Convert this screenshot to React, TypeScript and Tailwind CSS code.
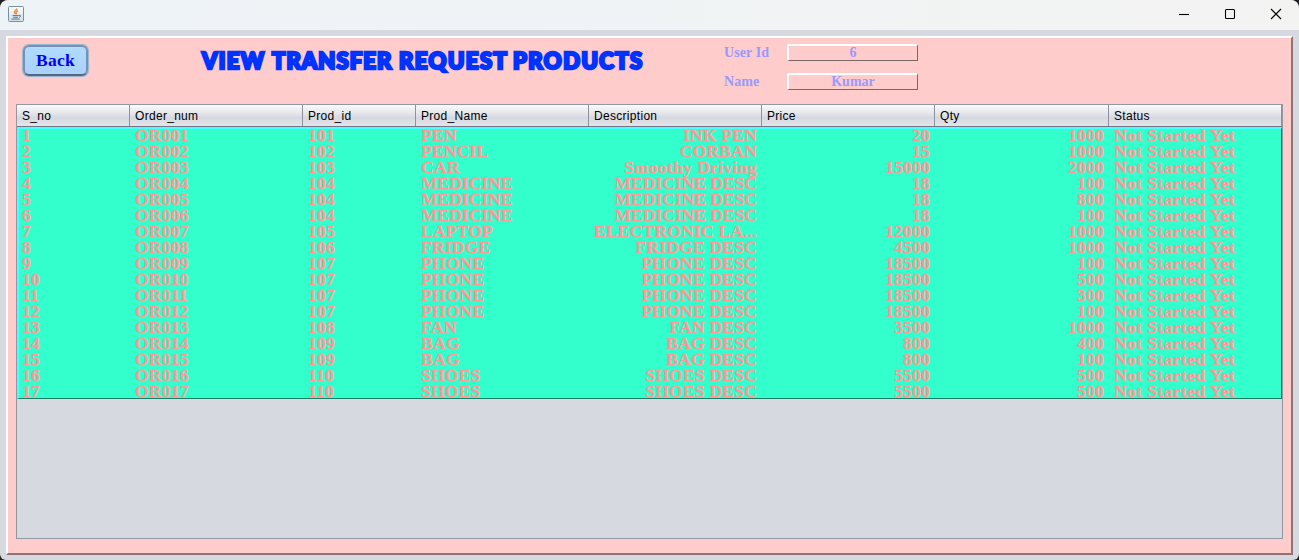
const columns = [
  { title: 'S_no', right: false },
  { title: 'Order_num', right: false },
  { title: 'Prod_id', right: false },
  { title: 'Prod_Name', right: false },
  { title: 'Description', right: true },
  { title: 'Price', right: true },
  { title: 'Qty', right: true },
  { title: 'Status', right: false },
];

const products: string[][] = [
  ['101', 'PEN', 'INK PEN', '20', '1000'],
  ['102', 'PENCIL', 'CORBAN', '15', '1000'],
  ['103', 'CAR', 'Smoothy Driving', '15000', '2000'],
  ['104', 'MEDICINE', 'MEDICINE DESC', '18', '100'],
  ['104', 'MEDICINE', 'MEDICINE DESC', '18', '800'],
  ['104', 'MEDICINE', 'MEDICINE DESC', '18', '100'],
  ['105', 'LAPTOP', 'ELECTRONIC LA...', '12000', '1000'],
  ['106', 'FRIDGE', 'FRIDGE DESC', '4500', '1000'],
  ['107', 'PHONE', 'PHONE DESC', '18500', '100'],
  ['107', 'PHONE', 'PHONE DESC', '18500', '500'],
  ['107', 'PHONE', 'PHONE DESC', '18500', '300'],
  ['107', 'PHONE', 'PHONE DESC', '18500', '100'],
  ['108', 'FAN', 'FAN DESC', '3500', '1000'],
  ['109', 'BAG', 'BAG DESC', '800', '400'],
  ['109', 'BAG', 'BAG DESC', '800', '100'],
  ['110', 'SHOES', 'SHOES DESC', '5500', '500'],
  ['110', 'SHOES', 'SHOES DESC', '5500', '500'],
];

const grid = 'grid grid-cols-[113px_173px_113px_173px_173px_173px_174px_173px]';

function tracking(text: string) {
  if (text.startsWith('MEDICINE')) return 'tracking-[0px]';
  if (text.startsWith('Not')) return 'tracking-[0.42px]';
  if (text.startsWith('Smoothy')) return 'tracking-[0.35px]';
  if (/^(CAR|FAN|BAG|PEN)$/.test(text)) return 'tracking-[0.35px]';
  return 'tracking-[0.23px]';
}

function JavaIcon() {
  return (
    <svg width="16" height="16" viewBox="0 0 16 16">
      <defs>
        <linearGradient id="tile" x1="0" y1="0" x2="0" y2="1">
          <stop offset="0" stopColor="#ffffff" />
          <stop offset="1" stopColor="#d3dce3" />
        </linearGradient>
      </defs>
      <rect x="0.5" y="0.5" width="15" height="15" rx="1" fill="url(#tile)" stroke="#7690a5" />
      <path d="M8.8 2.4C9 4 6 4.8 6.4 6.3C6.6 7 7.2 7.4 7.4 8.2M10 4.6C8.6 5.2 7.8 5.9 8.2 6.8C8.5 7.4 8.4 7.8 8 8.3" fill="none" stroke="#ee8420" strokeWidth="1.3" />
      <path d="M4.5 9.6H10.8M5.3 11.3H10M3.4 13.1H11.6M11 9.4C13.4 8.8 13.2 10.9 11 11.3" fill="none" stroke="#4f7a9b" strokeWidth="1" />
    </svg>
  );
}

function TitleBar() {
  return (
    <header className="flex h-[30px] shrink-0 items-start justify-between rounded-t-lg bg-linear-to-r from-[#eef3f8] to-[#f3f3f2] pl-2">
      <div className="pt-1.5">
        <JavaIcon />
      </div>
      <div className="flex">
        {['M0 5.5H10', 'M1.5 .5H8.5Q9.5 .5 9.5 1.5V8.5Q9.5 9.5 8.5 9.5H1.5Q.5 9.5 .5 8.5V1.5Q.5 .5 1.5 .5Z', 'M0 0L10 10M10 0L0 10'].map((d) => (
          <div key={d} className="flex h-[28px] w-[46px] items-center justify-center">
            <svg width="10" height="10" viewBox="0 0 10 10" className="overflow-visible">
              <path d={d} fill="none" stroke="#000" strokeWidth="1.1" />
            </svg>
          </div>
        ))}
      </div>
    </header>
  );
}

function Field({ label, value }: { label: string; value: string }) {
  return (
    <div className="flex h-[18px] items-start text-[14px] leading-[18px] font-bold text-[#9999ff]">
      <div className="w-[63px] tracking-[0.1px]">{label}</div>
      <div className="h-[17px] w-[131px] border-t-2 border-r border-b border-l-2 border-t-white border-r-[#7f6666] border-b-[#7f6666] border-l-white text-center leading-[14px]">
        {value}
      </div>
    </div>
  );
}

function Heading() {
  return (
    <h1 className="flex h-[30px] items-center font-['Lato'] text-[22px] leading-[30px] font-black whitespace-nowrap text-[#0033ff] [-webkit-text-stroke:2.6px_#0033ff]">
      <span className="w-[70px] tracking-[1.3px]">VIEW</span>
      <span className="w-[127px] tracking-[1.1px]">TRANSFER</span>
      <span className="w-[114px] tracking-[1.5px]">REQUEST</span>
      <span className="w-[131px] tracking-[1.5px]">PRODUCTS</span>
    </h1>
  );
}

function ProductTable() {
  return (
    <div className="h-[435px] w-[1267px] border border-[#9297a1] bg-[#d6d9e0]">
      <div className={`${grid} h-[22px] border-b border-[#6f7785] bg-[linear-gradient(#fafafb,#e4e6ea_40%,#d5d8df_60%,#e3e5ea)] font-['Liberation_Sans'] text-[12px] leading-[23px] tracking-[0.3px] text-black`}>
        {columns.map((c) => (
          <div key={c.title} className="h-[21px] border-r border-[#8d929c] pl-[5px]">
            {c.title}
          </div>
        ))}
      </div>
      <div className="h-[272px] border-t-2 border-r border-b border-l-2 border-t-[#47ffff] border-r-[#197f66] border-b-[#197f66] border-l-[#47ffff] bg-[#33ffcc]">
        <div className="-mt-0.5 -mr-px -ml-0.5">
          {products.map((p, i) => {
            const cells = [`${i + 1}`, `OR${String(i + 1).padStart(3, '0')}`, ...p, 'Not Started Yet'];
            return (
              <div key={i} className={`${grid} h-4 text-[17.5px] leading-[17px] font-bold text-[#ff9999] [-webkit-text-stroke:0.2px_#ff9999]`}>
                {cells.map((cell, j) => (
                  <div
                    key={j}
                    className={`h-4 pl-[5px] whitespace-nowrap ${tracking(cell)} ${columns[j].right ? 'pr-[5px] text-right' : ''}`}
                  >
                    {cell}
                  </div>
                ))}
              </div>
            );
          })}
        </div>
      </div>
    </div>
  );
}

export default function App() {
  return (
    <div className="h-[560px] w-[1299px] overflow-hidden bg-[#222] font-['Liberation_Serif',serif]">
      <div className="flex h-full flex-col overflow-hidden rounded-t-lg rounded-b-md bg-[#d6d9e0]">
        <TitleBar />
        <main className="mt-1.5 ml-1.5 h-[519px] w-[1287px] border-2 border-t-white border-r-[#8f7272] border-b-[#8f7272] border-l-white bg-[#ffcccc] pl-2">
          <div className="flex h-[66px] items-start">
            <button className="mt-[7px] ml-[7px] h-[31px] w-[65px] rounded-md border-2 border-[#7891ad] border-b-[#566779] bg-linear-to-b from-[#b0dbff] to-[#a9d0fc] text-[17.5px] leading-[27px] font-bold tracking-[0.3px] text-[#0000ff] shadow-[0_0_1px_1px_#8db5dc]">
              Back
            </button>
            <div className="mt-[8px] ml-[114px] w-[522px]">
              <Heading />
            </div>
            <div className="flex flex-col gap-[11px] pt-[6px]">
              <Field label="User Id" value="6" />
              <Field label="Name" value="Kumar" />
            </div>
          </div>
          <ProductTable />
        </main>
      </div>
    </div>
  );
}
